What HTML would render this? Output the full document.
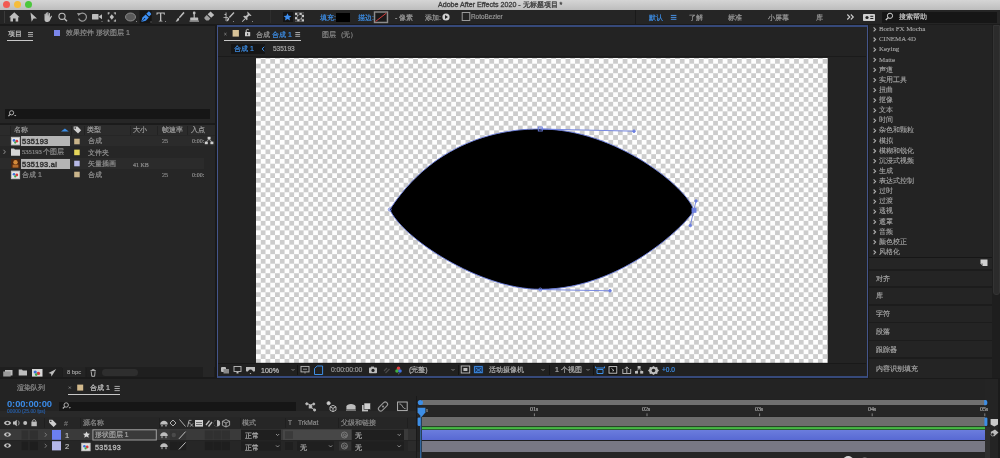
<!DOCTYPE html>
<html><head><meta charset="utf-8">
<style>
*{margin:0;padding:0;box-sizing:border-box}
html,body{width:1000px;height:458px;overflow:hidden;background:#1a1a1a;font-family:"Liberation Sans",sans-serif;color:#9a9a9a;font-size:8px}
.a{position:absolute}
.t{position:absolute;z-index:5;white-space:nowrap;line-height:1;will-change:transform;-webkit-text-stroke:0.2px currentColor}
svg{position:absolute;overflow:visible}
#title{left:0;top:0;width:1000px;height:9.5px;background:linear-gradient(#d5d5d5,#bdbdbd)}
#tool{left:0;top:9.5px;width:1000px;height:14.5px;background:#252525}
#proj{left:0;top:26px;width:214.5px;height:351px;background:#262626}
#comp{left:216.6px;top:25px;width:651.2px;height:353px;background:#232323;border:1.6px solid #44558a;border-top:2px solid #36497a;border-bottom:2px solid #36497a}
#right{left:869px;top:24px;width:131px;height:354px;background:#1c1c1c}
#tl{left:0;top:379px;width:1000px;height:79px;background:#232323}
.checker{background-color:#fff;background-image:linear-gradient(45deg,#cbcbcb 25%,transparent 25%,transparent 75%,#cbcbcb 75%),linear-gradient(45deg,#cbcbcb 25%,transparent 25%,transparent 75%,#cbcbcb 75%);background-size:9.4px 9.4px;background-position:0 0,4.7px 4.7px}
</style></head><body>
<!-- TITLE BAR -->
<div id="title" class="a"></div>
<div class="a" style="left:3.4px;top:1px;width:7px;height:7px;border-radius:50%;background:#f25a52"></div>
<div class="a" style="left:14.1px;top:1px;width:7px;height:7px;border-radius:50%;background:#f6bd3b"></div>
<div class="a" style="left:24.9px;top:1px;width:7px;height:7px;border-radius:50%;background:#4cc73d"></div>
<div class="t" style="left:437.5px;top:1.5px;font-size:7.1px;color:#3c3c3c;-webkit-text-stroke:0.3px #3c3c3c">Adobe After Effects 2020 - 无标题项目 *</div>
<!-- TOOLBAR -->
<div id="tool" class="a"></div>
<div class="a" style="left:3.5px;top:11px;width:1px;height:12px;background:#3a3a3a"></div>
<svg style="left:0;top:9px" width="270" height="15">
<g fill="#bdbdbd" stroke="none">
<!-- home -->
<path d="M14.3,3.3 L19.6,8.2 L18.2,8.2 L18.2,12.4 L15.6,12.4 L15.6,9.6 L13,9.6 L13,12.4 L10.4,12.4 L10.4,8.2 L9,8.2 Z"/>
<!-- arrow -->
<path d="M30.5,3.5 L37,9.5 L33.6,9.6 L31.6,12.8 Z"/>
<!-- hand -->
<path d="M44.5,8 L44.5,5.2 C44.5,4.5 45.6,4.5 45.6,5.2 L45.6,7.5 L45.8,4 C45.8,3.3 46.9,3.3 46.9,4 L47,7.3 L47.3,3.6 C47.3,2.9 48.4,2.9 48.4,3.6 L48.4,7.3 L48.9,4.4 C49,3.7 50,3.8 50,4.5 L49.8,8.5 L51,7 C51.5,6.4 52.3,6.9 51.9,7.6 L49.9,11.6 C49.3,12.6 48.6,13 47.6,13 L46.6,13 C45.3,13 44.5,12 44.5,10.8 Z"/>
</g>
<g fill="none" stroke="#bdbdbd">
<!-- zoom -->
<circle cx="62" cy="7.3" r="3.1" stroke-width="1.1"/><line x1="64.3" y1="9.6" x2="67" y2="12.3" stroke-width="1.4"/>
<!-- rotate -->
<path d="M79.3,5.6 A4,4 0 1 1 78.7,9.5" stroke-width="1.2" stroke="#9a9a9a"/>
</g>
<g fill="#bdbdbd">
<path d="M77,4 L80.6,4.2 L78.6,7 Z" fill="#9a9a9a"/>
<!-- camera -->
<rect x="92" y="5" width="6.5" height="5.5" rx="0.6"/><path d="M98.5,7.7 L102,5.3 L102,10.3 Z"/>
<rect x="101.5" y="12" width="1" height="1" fill="#888"/>
<!-- pan behind -->
<g fill="#bdbdbd"><rect x="107.8" y="3.5" width="2" height="1"/><rect x="113.8" y="3.5" width="2" height="1"/><rect x="107.8" y="11.5" width="2" height="1"/><rect x="113.8" y="11.5" width="2" height="1"/><rect x="107.8" y="3.5" width="1" height="2"/><rect x="114.8" y="3.5" width="1" height="2"/><rect x="107.8" y="10.5" width="1" height="2"/><rect x="114.8" y="10.5" width="1" height="2"/><path d="M111.8,5.2 L114,8 L111.8,10.8 L109.6,8 Z"/></g>
<!-- ellipse -->
<ellipse cx="130.5" cy="8" rx="5" ry="4" fill="#5a5a5a" stroke="#9a9a9a" stroke-width="0.8"/>
<rect x="136" y="12" width="1" height="1" fill="#888"/>
</g>
<rect x="139.6" y="1.5" width="12" height="13" fill="#151515"/>
<path d="M141.2,13 L142.4,8.4 L145.6,5.4 L148.8,8.6 L145.8,11.8 Z" fill="#3d8ef0"/><line x1="141.4" y1="12.8" x2="144.4" y2="9.8" stroke="#10203a" stroke-width="0.7"/><circle cx="144.6" cy="9.6" r="0.7" fill="#10203a"/>
<path d="M146.3,4.7 L148.3,2.7 C149,2 151.8,4.8 151.1,5.5 L149.1,7.5 Z" fill="#3d8ef0"/>
<rect x="150.5" y="12.5" width="1" height="1" fill="#888"/>
<g fill="#bdbdbd">
<!-- T -->
<path d="M156.5,3.5 L164.8,3.5 L164.8,5.8 L164,5.8 L163.5,4.6 L161.3,4.6 L161.3,11.6 L162.5,12 L162.5,12.6 L158.8,12.6 L158.8,12 L160,11.6 L160,4.6 L157.8,4.6 L157.3,5.8 L156.5,5.8 Z"/>
<rect x="165" y="12" width="1" height="1" fill="#888"/>
<!-- brush -->
<path d="M183.5,2.8 L184.6,3.9 L179.8,9.2 L178.8,8.2 Z"/><path d="M178.3,8.8 L179.3,9.8 C179,12 177.6,12.8 175.6,12.8 C176.8,11.8 176.6,9.8 178.3,8.8 Z"/>
<!-- stamp -->
<circle cx="194.2" cy="4" r="1.4"/><rect x="193.6" y="4" width="1.2" height="5"/><rect x="190.2" y="8.6" width="8" height="2.8" rx="0.5"/><rect x="189.5" y="11.6" width="9.5" height="1"/>
<!-- eraser -->
<path d="M207.6,5.2 L210.6,2.4 L214.2,6 L211.2,8.8 Z"/><path d="M206.8,6 L210.4,9.6 L208.6,11.4 L206.2,11.4 L204.8,10 C204.2,9.4 204.2,8.6 204.8,8 Z" fill="#9f9f9f"/>
<!-- roto brush -->
<path d="M224.5,5 L225.6,5 L225.6,3.5 L226.5,3.5 L226.5,12 L225.6,12 L225.6,6 L224.5,6 Z"/><path d="M223.5,8.2 L228,8.2 L228,9 L223.5,9 Z"/>
<path d="M233.5,3 L234.5,4 L229.8,9 L228.8,8 Z"/><path d="M228.3,8.5 L229.3,9.5 C229,11.6 227.9,12.5 226.3,12.6 C227.3,11.6 227,9.7 228.3,8.5 Z"/>
<rect x="233" y="12" width="1" height="1" fill="#888"/>
<!-- pin -->
<path d="M247.5,2.6 L251.6,6.7 L250.6,7.1 L249.2,6.6 L247.3,8.5 L247.6,10.4 L246.8,11.2 L243.2,7.6 L244,6.8 L245.9,7.1 L247.8,5.2 L247.3,3.8 Z"/><path d="M244.6,9.4 L245.4,10.2 L242.4,13 L241.8,12.4 Z"/>
<rect x="252" y="12" width="1" height="1" fill="#888"/>
</g>
</svg>
<div class="a" style="left:269.5px;top:10px;width:1px;height:13px;background:#2e2e2e"></div>
<div class="a" style="left:282.6px;top:12.3px;width:10.2px;height:9.6px;background:#141414"></div>
<svg style="left:0;top:9px" width="1000" height="15">
<path d="M287.5,4.2 L288.7,6.7 L291.4,7 L289.4,8.8 L290,11.5 L287.5,10.1 L285,11.5 L285.6,8.8 L283.6,7 L286.3,6.7 Z" fill="#3d8ef0"/>
<rect x="295" y="3.7" width="9" height="8.8" fill="#c8c8c8"/><rect x="295.00" y="5.90" width="2.25" height="2.2" fill="#3a3a3a"/><rect x="295.00" y="10.30" width="2.25" height="2.2" fill="#3a3a3a"/><rect x="297.25" y="3.70" width="2.25" height="2.2" fill="#3a3a3a"/><rect x="297.25" y="8.10" width="2.25" height="2.2" fill="#3a3a3a"/><rect x="299.50" y="5.90" width="2.25" height="2.2" fill="#3a3a3a"/><rect x="299.50" y="10.30" width="2.25" height="2.2" fill="#3a3a3a"/><rect x="301.75" y="3.70" width="2.25" height="2.2" fill="#3a3a3a"/><rect x="301.75" y="8.10" width="2.25" height="2.2" fill="#3a3a3a"/><circle cx="299.5" cy="8.1" r="2" fill="#2a2a2a"/>
<rect x="374.5" y="3" width="13" height="10.5" fill="none" stroke="#8c8c8c" stroke-width="1.4"/>
<rect x="376" y="4.5" width="10" height="7.5" fill="#1a1a1a"/>
<line x1="375.5" y1="12.5" x2="386.5" y2="4" stroke="#d43d3d" stroke-width="1"/>
<circle cx="446" cy="8" r="3.6" fill="#d0d0d0"/><path d="M445,6 L448,8 L445,10 Z" fill="#222"/>
<rect x="462.2" y="3.5" width="7.6" height="8" fill="none" stroke="#9a9a9a" stroke-width="1"/>
<rect x="670.8" y="5.9" width="5.6" height="1" fill="#4a8fe0"/><rect x="670.8" y="7.9" width="5.6" height="1" fill="#4a8fe0"/><rect x="670.8" y="9.8" width="5.6" height="1" fill="#4a8fe0"/>
<path d="M847.3,5.5 L849.8,8 L847.3,10.5 M850.8,5.5 L853.3,8 L850.8,10.5" stroke="#cfcfcf" stroke-width="1.1" fill="none"/>
<rect x="863" y="5" width="12" height="7" rx="0.8" fill="#cfcfcf"/>
<circle cx="867" cy="8.5" r="1.6" fill="#222"/><rect x="870.3" y="6.8" width="3" height="1" fill="#222"/><rect x="870.3" y="9" width="3" height="1" fill="#222"/>
</svg>
<div class="a" style="left:336.2px;top:12.8px;width:13.4px;height:9px;background:#000"></div>
<div class="t" style="left:319.5px;top:13.6px;font-size:7px;color:#3d8ee6">填充:</div>
<div class="t" style="left:357.5px;top:13.6px;font-size:7px;color:#3d8ee6">描边:</div>
<div class="t" style="left:395px;top:13.6px;font-size:7px;color:#9a9a9a">- 像素</div>
<div class="t" style="left:425px;top:13.6px;font-size:7px;color:#9a9a9a">添加:</div>
<div class="t" style="left:471.4px;top:13.8px;font-size:6.4px;color:#9a9a9a">RotoBezier</div>
<div class="a" style="left:635px;top:10px;width:1px;height:14px;background:#1a1a1a"></div>
<div class="t" style="left:648.8px;top:13.6px;font-size:7px;color:#3d8ee6">默认</div>
<div class="t" style="left:689px;top:13.6px;font-size:7px;color:#9a9a9a">了解</div>
<div class="t" style="left:728px;top:13.6px;font-size:7px;color:#9a9a9a">标准</div>
<div class="t" style="left:768.4px;top:13.6px;font-size:7px;color:#9a9a9a">小屏幕</div>
<div class="t" style="left:816px;top:13.6px;font-size:7px;color:#9a9a9a">库</div>
<div class="a" style="left:882px;top:12px;width:115px;height:10.6px;background:#161616"></div>
<svg style="left:0;top:0" width="1000" height="30">
<circle cx="890" cy="15.8" r="2.6" fill="none" stroke="#cfcfcf" stroke-width="1"/><line x1="888.2" y1="17.6" x2="885.8" y2="20" stroke="#cfcfcf" stroke-width="1.3"/>
</svg>
<div class="t" style="left:899px;top:13.4px;font-size:7px;color:#c8c8c8">搜索帮助</div>

<!-- PANELS -->
<div id="proj" class="a"></div>
<div class="t" style="left:7.5px;top:30px;font-size:7.2px;color:#c4c4c4">项目</div>
<svg style="left:0;top:0" width="40" height="42"><g fill="#a8a8a8"><rect x="28" y="32" width="5" height="1"/><rect x="28" y="33.9" width="5" height="1"/><rect x="28" y="35.8" width="5" height="1"/></g></svg>
<div class="a" style="left:7px;top:39.6px;width:26px;height:1.2px;background:#c8c8c8"></div>
<div class="a" style="left:54px;top:30.4px;width:6.2px;height:6px;background:#7a86ea"></div>
<div class="t" style="left:65.8px;top:30.2px;font-size:7.1px;color:#8c8c8c">效果控件 形状图层 1</div>
<div class="a" style="left:5px;top:108.8px;width:205px;height:10.4px;background:#161616"></div>
<svg style="left:0;top:0" width="215" height="380">
<circle cx="11.6" cy="112.8" r="2.1" fill="none" stroke="#bdbdbd" stroke-width="0.9"/><line x1="10.2" y1="114.3" x2="8.4" y2="116.2" stroke="#bdbdbd" stroke-width="1.1"/><path d="M14,115 L16.4,115 L15.2,116.3Z" fill="#bdbdbd"/>
</svg>
<div class="a" style="left:0;top:123.4px;width:215px;height:1.2px;background:#1b1b1b"></div>
<div class="a" style="left:0;top:124.6px;width:214.5px;height:10.6px;background:#2b2b2b"></div><div class="a" style="left:10.3px;top:125.5px;width:0.8px;height:9px;background:#222"></div><div class="a" style="left:71.4px;top:125.5px;width:0.8px;height:9px;background:#222"></div>
<div class="a" style="left:129.6px;top:125.5px;width:0.8px;height:9px;background:#222"></div>
<div class="a" style="left:157.2px;top:125.5px;width:0.8px;height:9px;background:#222"></div>
<div class="a" style="left:187px;top:125.5px;width:0.8px;height:9px;background:#222"></div>
<div class="a" style="left:84px;top:125.5px;width:0.8px;height:9px;background:#222"></div>
<div class="t" style="left:13.6px;top:126.4px;font-size:7px;color:#9c9c9c">名称</div>
<svg style="left:0;top:0" width="215" height="380">
<path d="M61,131.6 L64.9,128.6 L68.8,131.6 Z" fill="#3d8ee6"/>
<path d="M73.6,126.6 L77.5,126.6 L81.2,130.3 L78,133.5 L73.6,129.3 Z" fill="#cfcfcf"/><circle cx="75.2" cy="128.1" r="0.8" fill="#2b2b2b"/>
</svg>
<div class="t" style="left:86.8px;top:126.4px;font-size:7px;color:#9c9c9c">类型</div>
<div class="t" style="left:132.6px;top:126.4px;font-size:7px;color:#9c9c9c">大小</div>
<div class="t" style="left:161.5px;top:126.4px;font-size:7px;color:#9c9c9c">帧速率</div>
<div class="t" style="left:190.8px;top:126.4px;font-size:7px;color:#9c9c9c">入点</div>
<!-- rows -->
<div class="a" style="left:0;top:135.6px;width:214.5px;height:10.6px;background:#2b2b2b"></div>
<div class="a" style="left:0;top:158.3px;width:204px;height:10.6px;background:#2b2b2b"></div>
<div class="a" style="left:20.8px;top:136.1px;width:49.1px;height:9.8px;background:#b5b5b5"></div>
<div class="a" style="left:20.8px;top:158.5px;width:49.1px;height:10.3px;background:#b5b5b5"></div>
<svg style="left:0;top:0" width="215" height="380">
<g><rect x="10.9" y="136.8" width="9.2" height="8.6" fill="#bdbdbd"/><rect x="12" y="137.9" width="7" height="6.4" fill="#e6e6e6"/><circle cx="14" cy="140.4" r="1.3" fill="#3a6fd8"/><circle cx="16.8" cy="141.20000000000002" r="1.4" fill="#d83a3a"/><circle cx="15.2" cy="142.60000000000002" r="1.1" fill="#3aa84a"/></g>
<path d="M3.5,149.8 L5.4,151.9 L3.5,154" fill="none" stroke="#9a9a9a" stroke-width="0.9"/>
<path d="M11,148.5 L14,148.5 L15,149.5 L20,149.5 L20,155.8 L11,155.8 Z" fill="#d6d6d6"/>
<g><rect x="11" y="159" width="9" height="9.2" fill="#4a2410"/><circle cx="15.5" cy="162.2" r="2.2" fill="#d58a3a"/><rect x="12.6" y="164.6" width="5.8" height="3" fill="#b56a2a"/></g>
<g><rect x="10.9" y="170.6" width="9.2" height="8.6" fill="#bdbdbd"/><rect x="12" y="171.7" width="7" height="6.4" fill="#e6e6e6"/><circle cx="14" cy="174.2" r="1.3" fill="#3a6fd8"/><circle cx="16.8" cy="175.0" r="1.4" fill="#d83a3a"/><circle cx="15.2" cy="176.4" r="1.1" fill="#3aa84a"/></g>
<rect x="74.2" y="138.7" width="5.5" height="5.6" fill="#c9b48a"/>
<rect x="74.2" y="149.6" width="5.5" height="5.6" fill="#e6d65a"/>
<rect x="74.2" y="160.7" width="5.5" height="5.6" fill="#b6b8e6"/>
<rect x="74.2" y="171.7" width="5.5" height="5.6" fill="#c9b48a"/>
<g fill="#d0d0d0"><rect x="207.6" y="136.8" width="3" height="2.6"/><rect x="204.8" y="141.6" width="3" height="2.6"/><rect x="210.4" y="141.6" width="3" height="2.6"/><path d="M209,139.4 L206.3,141.6 M209,139.4 L211.9,141.6" stroke="#d0d0d0" stroke-width="0.6"/></g>
</svg>
<div class="t" style="left:22px;top:138px;font-size:7.4px;color:#333;letter-spacing:0.3px;-webkit-text-stroke:0.45px #333">535193</div>
<div class="t" style="left:22px;top:160.8px;font-size:7.4px;color:#333;letter-spacing:0.3px;-webkit-text-stroke:0.45px #333">535193.ai</div>
<div class="t" style="left:22px;top:148.6px;font-size:6.6px;color:#8c8c8c;font-family:'Liberation Serif',serif">535193 个图层</div>
<div class="t" style="left:22px;top:171.3px;font-size:7px;color:#8c8c8c">合成 1</div>
<div class="t" style="left:88px;top:137.9px;font-size:6.6px;color:#909090">合成</div>
<div class="t" style="left:88px;top:149.6px;font-size:6.6px;color:#909090">文件夹</div>
<div class="t" style="left:88px;top:160.8px;font-size:6.6px;color:#909090">矢量插画</div>
<div class="t" style="left:88px;top:172.1px;font-size:6.6px;color:#909090">合成</div>
<div class="t" style="left:133.4px;top:161.8px;font-size:6px;color:#8c8c8c;font-family:'Liberation Serif',serif">41 KB</div>
<div class="t" style="left:162.4px;top:138px;font-size:6px;color:#8c8c8c;font-family:'Liberation Serif',serif">25</div>
<div class="t" style="left:162.4px;top:172px;font-size:6px;color:#8c8c8c;font-family:'Liberation Serif',serif">25</div>
<div class="t" style="left:191.5px;top:138px;font-size:6px;color:#8c8c8c;font-family:'Liberation Serif',serif">0:00:</div>
<div class="t" style="left:191.5px;top:172px;font-size:6px;color:#8c8c8c;font-family:'Liberation Serif',serif">0:00:</div>
<!-- project bottom toolbar -->
<div class="a" style="left:0;top:366.5px;width:215px;height:0.8px;background:#1a1a1a"></div>
<div class="a" style="left:0;top:366.6px;width:214.5px;height:10.6px;background:#1f1f1f"></div><div class="a" style="left:62.3px;top:367.4px;width:23px;height:9.2px;background:#242424"></div><div class="a" style="left:203px;top:367.4px;width:11px;height:9.2px;background:#262626"></div>
<svg style="left:0;top:0" width="215" height="380">
<g fill="#bdbdbd">
<rect x="5" y="370" width="7.5" height="5.5"/><rect x="3.2" y="371.5" width="7.5" height="5" fill="#9a9a9a"/>
<path d="M18.7,369.5 L22,369.5 L22.8,370.5 L27,370.5 L27,375.5 L18.7,375.5 Z"/>
<rect x="32" y="369" width="10.5" height="7.6" fill="#d8d8d8"/><circle cx="35.2" cy="372" r="1.6" fill="#3a6fd8"/><circle cx="38.4" cy="373.4" r="1.7" fill="#d83a3a"/><circle cx="36.2" cy="374.6" r="1.3" fill="#3aa84a"/>
<path d="M56.2,369 L48.5,373 L51,373.8 L51.5,376.4 Z"/>
<path d="M90.5,370.6 L95.8,370.6 M91.2,371.4 L91.8,376.3 L94.6,376.3 L95.1,371.4 M92.2,370.6 L92.2,369.6 L94.2,369.6 L94.2,370.6" stroke="#bdbdbd" stroke-width="0.9" fill="none"/>
</g>
</svg>
<div class="a" style="left:61.5px;top:368px;width:0.8px;height:9px;background:#1d1d1d"></div>
<div class="a" style="left:85.5px;top:368px;width:0.8px;height:9px;background:#1d1d1d"></div>
<div class="t" style="left:66.7px;top:369.6px;font-size:5.8px;color:#9a9a9a">8 bpc</div>
<div class="a" style="left:102px;top:368.6px;width:36px;height:7.6px;border-radius:4px;background:#2e2e2e"></div>

<div id="comp" class="a"></div>
<svg style="left:0;top:0" width="870" height="60">
<path d="M224.3,33 L226.5,35.2 M226.5,33 L224.3,35.2" stroke="#8a8a8a" stroke-width="0.8"/>
<rect x="232.6" y="30" width="6.3" height="6.6" fill="#d8c298"/>
<path d="M246.2,32 L246.2,30.6 C246.2,29.2 248.4,29 248.8,30" fill="none" stroke="#cfcfcf" stroke-width="1"/>
<rect x="245" y="32" width="5.2" height="4.2" rx="0.5" fill="#cfcfcf"/><rect x="247.2" y="33.2" width="0.9" height="2" fill="#232323"/>
<rect x="295.3" y="32" width="4.8" height="1" fill="#a8a8a8"/><rect x="295.3" y="33.9" width="4.8" height="1" fill="#a8a8a8"/><rect x="295.3" y="35.8" width="4.8" height="1" fill="#a8a8a8"/>
</svg>
<div class="t" style="left:255.8px;top:30.6px;font-size:7px;color:#9a9a9a">合成</div>
<div class="t" style="left:271.8px;top:30.6px;font-size:7px;color:#3d8ee6">合成 1</div>
<div class="a" style="left:224px;top:39.6px;width:77px;height:1.2px;background:#c8c8c8"></div>
<div class="t" style="left:322px;top:30.6px;font-size:7px;color:#8a8a8a;letter-spacing:-0.45px">图层 （无）</div>
<div class="a" style="left:230.7px;top:44px;width:34.2px;height:9.8px;background:#161616"></div>
<div class="t" style="left:234px;top:45.4px;font-size:7px;color:#3d8ee6">合成 1</div>
<svg style="left:0;top:0" width="870" height="60"><path d="M264.3,46.8 L262,48.9 L264.3,51" fill="none" stroke="#3d8ee6" stroke-width="1"/></svg>
<div class="t" style="left:272.6px;top:46.2px;font-size:6.5px;color:#a8a8a8">535193</div>
<div class="a" style="left:218px;top:55.8px;width:648px;height:1px;background:#1a1a1a"></div>
<!-- comp bottom toolbar -->
<div class="a" style="left:218.2px;top:362.8px;width:648px;height:13.2px;background:#212121;border-top:1px solid #191919"></div>
<svg style="left:0;top:0" width="870" height="380">
<g fill="#bdbdbd">
<rect x="221" y="367" width="5" height="5" rx="1"/><rect x="223.5" y="369" width="5.5" height="4.5" fill="#8a8a8a"/>
<rect x="234" y="366.5" width="7" height="5" fill="none" stroke="#bdbdbd" stroke-width="0.9"/><rect x="236.5" y="372" width="2" height="1.5"/>
<path d="M246,367 L255,367 L255,370.5 C255,372 253,372 252.4,370.6 L251.2,369.5 L249.8,369.5 L248.6,370.6 C248,372 246,372 246,370.5 Z"/><path d="M249.6,373 L251.4,373 L250.5,374.2Z"/>
<path d="M291.5,369 L293,370.5 L294.5,369" fill="none" stroke="#9a9a9a" stroke-width="0.8"/>
<rect x="301" y="366.4" width="8" height="5.5" fill="none" stroke="#bdbdbd" stroke-width="0.9"/><path d="M304.2,372.6 L305.8,372.6 L305,373.8Z"/><line x1="303" y1="369.2" x2="307" y2="369.2" stroke="#bdbdbd" stroke-width="0.7"/>
<path d="M314.5,374.5 L314.5,368.5 L317.2,366 L322.6,366 L322.6,374.5 Z" fill="none" stroke="#3d8ee6" stroke-width="1"/>
<rect x="369" y="367.6" width="8" height="5.6" rx="0.8"/><rect x="371" y="366.6" width="3" height="1.3"/><circle cx="373" cy="370.4" r="1.6" fill="#1f1f1f"/>
<path d="M384,371 L387,368 M385.5,373 L389.5,369" stroke="#4a4a4a" stroke-width="1.2"/>
<circle cx="398.5" cy="368.4" r="1.8" fill="#e04040"/><circle cx="397" cy="371" r="1.8" fill="#40b040"/><circle cx="400" cy="371" r="1.8" fill="#4070e0"/><path d="M398,373.6 L399.6,373.6 L398.8,374.6Z" fill="#9a9a9a"/>
<path d="M451.5,369 L453,370.5 L454.5,369" fill="none" stroke="#9a9a9a" stroke-width="0.8"/>
<rect x="461.2" y="366" width="8.5" height="7" fill="none" stroke="#bdbdbd" stroke-width="0.9"/><rect x="463.4" y="368" width="4" height="3"/>
<rect x="473.6" y="365.6" width="9.6" height="8" fill="#1b3a66"/><rect x="474.6" y="366.6" width="7.6" height="6" fill="none" stroke="#3d8ee6" stroke-width="0.9"/><path d="M476,368 L481,372 M481,368 L476,372" stroke="#3d8ee6" stroke-width="0.8"/>
<path d="M541.5,369 L543,370.5 L544.5,369" fill="none" stroke="#9a9a9a" stroke-width="0.8"/>
<path d="M586.5,369 L588,370.5 L589.5,369" fill="none" stroke="#9a9a9a" stroke-width="0.8"/>
<path d="M595.5,366.5 L595.5,368 L604.5,368 L604.5,366.5 M597,369.5 L603,369.5 L603,373.5 L597,373.5 Z" fill="none" stroke="#3d8ee6" stroke-width="1"/>
<rect x="607.6" y="365.2" width="10.6" height="9.6" fill="#111"/><rect x="609" y="366.6" width="7.8" height="6.6" fill="none" stroke="#cfcfcf" stroke-width="0.9"/><path d="M611.5,368.5 L614,370.5 L612.4,371" fill="none" stroke="#cfcfcf" stroke-width="0.8"/>
<path d="M622.5,373.5 L631,373.5 M622.8,373.5 L622.8,369 M630.7,373.5 L630.7,369 M626.8,373 L626.8,367 M624.8,369 L626.8,366.8 L628.8,369" fill="none" stroke="#bdbdbd" stroke-width="0.9"/>
<rect x="637.6" y="366" width="3" height="2.6"/><rect x="635" y="371" width="3" height="2.6"/><rect x="640.2" y="371" width="3" height="2.6"/><path d="M639.1,368.6 L636.5,371 M639.1,368.6 L641.7,371" stroke="#bdbdbd" stroke-width="0.7"/>
<path d="M653.5,366 L655.2,367.2 L657.2,367 L657.6,369 L659,370.5 L657.6,372 L657.2,374 L655.2,373.8 L653.5,375 L651.8,373.8 L649.8,374 L649.4,372 L648,370.5 L649.4,369 L649.8,367 L651.8,367.2 Z"/><circle cx="653.5" cy="370.5" r="1.8" fill="#1f1f1f"/>
</g>
</svg>
<div class="a" style="left:297px;top:364.5px;width:0.8px;height:10px;background:#141414"></div>
<div class="a" style="left:458px;top:364.5px;width:0.8px;height:10px;background:#141414"></div>
<div class="a" style="left:549px;top:364.5px;width:0.8px;height:10px;background:#141414"></div>
<div class="a" style="left:592.5px;top:364.5px;width:0.8px;height:10px;background:#141414"></div>
<div class="t" style="left:261px;top:367px;font-size:7px;color:#c0c0c0">100%</div>
<div class="t" style="left:330.6px;top:367.2px;font-size:6.8px;color:#9a9a9a;letter-spacing:-0.1px">0:00:00:00</div>
<div class="t" style="left:408.5px;top:366.4px;font-size:7px;color:#b0b0b0">(完整)</div>
<div class="t" style="left:489px;top:366.4px;font-size:7px;color:#b0b0b0">活动摄像机</div>
<div class="t" style="left:555px;top:366.4px;font-size:7px;color:#b0b0b0">1 个视图</div>
<div class="t" style="left:661.8px;top:367.4px;font-size:6.6px;color:#3d8ee6">+0.0</div>

<div id="right" class="a"></div>
<div class="a" style="left:869px;top:25px;width:123px;height:232px;background:#232323"></div>
<div class="a" style="left:992px;top:25px;width:8px;height:353px;background:#1e1e1e"></div><div class="a" style="left:993px;top:25px;width:6.5px;height:270px;background:#2b2b2b;border-radius:0 0 3px 3px;border:0.6px solid #333"></div>
<svg style="left:0;top:0" width="1000" height="458"><g fill="none" stroke="#b0b0b0" stroke-width="1.1"><path d="M873.6,27.4 L875.6,29.4 L873.6,31.4"/><path d="M873.6,37.5 L875.6,39.5 L873.6,41.5"/><path d="M873.6,47.7 L875.6,49.7 L873.6,51.7"/><path d="M873.6,57.8 L875.6,59.8 L873.6,61.8"/><path d="M873.6,67.9 L875.6,69.9 L873.6,71.9"/><path d="M873.6,78.1 L875.6,80.1 L873.6,82.1"/><path d="M873.6,88.2 L875.6,90.2 L873.6,92.2"/><path d="M873.6,98.3 L875.6,100.3 L873.6,102.3"/><path d="M873.6,108.4 L875.6,110.4 L873.6,112.4"/><path d="M873.6,118.6 L875.6,120.6 L873.6,122.6"/><path d="M873.6,128.7 L875.6,130.7 L873.6,132.7"/><path d="M873.6,138.8 L875.6,140.8 L873.6,142.8"/><path d="M873.6,149.0 L875.6,151.0 L873.6,153.0"/><path d="M873.6,159.1 L875.6,161.1 L873.6,163.1"/><path d="M873.6,169.2 L875.6,171.2 L873.6,173.2"/><path d="M873.6,179.4 L875.6,181.4 L873.6,183.4"/><path d="M873.6,189.5 L875.6,191.5 L873.6,193.5"/><path d="M873.6,199.6 L875.6,201.6 L873.6,203.6"/><path d="M873.6,209.7 L875.6,211.7 L873.6,213.7"/><path d="M873.6,219.9 L875.6,221.9 L873.6,223.9"/><path d="M873.6,230.0 L875.6,232.0 L873.6,234.0"/><path d="M873.6,240.1 L875.6,242.1 L873.6,244.1"/><path d="M873.6,250.3 L875.6,252.3 L873.6,254.3"/></g></svg>
<div class="t" style="left:879px;top:26.1px;font-size:6.9px;color:#a8a8a8;font-family:'Liberation Serif',serif;-webkit-text-stroke:0.1px currentColor">Boris FX Mocha</div>
<div class="t" style="left:879px;top:36.2px;font-size:6.9px;color:#a8a8a8;font-family:'Liberation Serif',serif;-webkit-text-stroke:0.1px currentColor">CINEMA 4D</div>
<div class="t" style="left:879px;top:46.4px;font-size:6.9px;color:#a8a8a8;font-family:'Liberation Serif',serif;-webkit-text-stroke:0.1px currentColor">Keying</div>
<div class="t" style="left:879px;top:56.5px;font-size:6.9px;color:#a8a8a8;font-family:'Liberation Serif',serif;-webkit-text-stroke:0.1px currentColor">Matte</div>
<div class="t" style="left:879px;top:66.6px;font-size:6.9px;color:#a8a8a8;font-family:'Liberation Serif',serif;-webkit-text-stroke:0.1px currentColor">声道</div>
<div class="t" style="left:879px;top:76.8px;font-size:6.9px;color:#a8a8a8;font-family:'Liberation Serif',serif;-webkit-text-stroke:0.1px currentColor">实用工具</div>
<div class="t" style="left:879px;top:86.9px;font-size:6.9px;color:#a8a8a8;font-family:'Liberation Serif',serif;-webkit-text-stroke:0.1px currentColor">扭曲</div>
<div class="t" style="left:879px;top:97.0px;font-size:6.9px;color:#a8a8a8;font-family:'Liberation Serif',serif;-webkit-text-stroke:0.1px currentColor">抠像</div>
<div class="t" style="left:879px;top:107.1px;font-size:6.9px;color:#a8a8a8;font-family:'Liberation Serif',serif;-webkit-text-stroke:0.1px currentColor">文本</div>
<div class="t" style="left:879px;top:117.3px;font-size:6.9px;color:#a8a8a8;font-family:'Liberation Serif',serif;-webkit-text-stroke:0.1px currentColor">时间</div>
<div class="t" style="left:879px;top:127.4px;font-size:6.9px;color:#a8a8a8;font-family:'Liberation Serif',serif;-webkit-text-stroke:0.1px currentColor">杂色和颗粒</div>
<div class="t" style="left:879px;top:137.5px;font-size:6.9px;color:#a8a8a8;font-family:'Liberation Serif',serif;-webkit-text-stroke:0.1px currentColor">模拟</div>
<div class="t" style="left:879px;top:147.7px;font-size:6.9px;color:#a8a8a8;font-family:'Liberation Serif',serif;-webkit-text-stroke:0.1px currentColor">模糊和锐化</div>
<div class="t" style="left:879px;top:157.8px;font-size:6.9px;color:#a8a8a8;font-family:'Liberation Serif',serif;-webkit-text-stroke:0.1px currentColor">沉浸式视频</div>
<div class="t" style="left:879px;top:167.9px;font-size:6.9px;color:#a8a8a8;font-family:'Liberation Serif',serif;-webkit-text-stroke:0.1px currentColor">生成</div>
<div class="t" style="left:879px;top:178.1px;font-size:6.9px;color:#a8a8a8;font-family:'Liberation Serif',serif;-webkit-text-stroke:0.1px currentColor">表达式控制</div>
<div class="t" style="left:879px;top:188.2px;font-size:6.9px;color:#a8a8a8;font-family:'Liberation Serif',serif;-webkit-text-stroke:0.1px currentColor">过时</div>
<div class="t" style="left:879px;top:198.3px;font-size:6.9px;color:#a8a8a8;font-family:'Liberation Serif',serif;-webkit-text-stroke:0.1px currentColor">过渡</div>
<div class="t" style="left:879px;top:208.4px;font-size:6.9px;color:#a8a8a8;font-family:'Liberation Serif',serif;-webkit-text-stroke:0.1px currentColor">透视</div>
<div class="t" style="left:879px;top:218.6px;font-size:6.9px;color:#a8a8a8;font-family:'Liberation Serif',serif;-webkit-text-stroke:0.1px currentColor">遮罩</div>
<div class="t" style="left:879px;top:228.7px;font-size:6.9px;color:#a8a8a8;font-family:'Liberation Serif',serif;-webkit-text-stroke:0.1px currentColor">音频</div>
<div class="t" style="left:879px;top:238.8px;font-size:6.9px;color:#a8a8a8;font-family:'Liberation Serif',serif;-webkit-text-stroke:0.1px currentColor">颜色校正</div>
<div class="t" style="left:879px;top:249.0px;font-size:6.9px;color:#a8a8a8;font-family:'Liberation Serif',serif;-webkit-text-stroke:0.1px currentColor">风格化</div>
<div class="a" style="left:869px;top:256.6px;width:123px;height:1px;background:#161616"></div>
<div class="a" style="left:869px;top:257.6px;width:123px;height:11.4px;background:#252525"></div>
<svg style="left:0;top:0" width="1000" height="458"><path d="M980.5,259.5 L987.5,259.5 L987.5,266 L983,266 L980.5,263.5 Z" fill="#d0d0d0"/><path d="M980.5,263.5 L983,263.5 L983,266" fill="#8a8a8a"/></svg>
<div class="a" style="left:869px;top:271px;width:122.5px;height:15px;background:#242424"></div>
<div class="t" style="left:876.3px;top:274.9px;font-size:7px;color:#a0a0a0">对齐</div>
<div class="a" style="left:869px;top:288px;width:122.5px;height:16px;background:#242424"></div>
<div class="t" style="left:876.3px;top:292.4px;font-size:7px;color:#a0a0a0">库</div>
<div class="a" style="left:869px;top:305.5px;width:122.5px;height:16.5px;background:#242424"></div>
<div class="t" style="left:876.3px;top:310.1px;font-size:7px;color:#a0a0a0">字符</div>
<div class="a" style="left:869px;top:323.4px;width:122.5px;height:16.600000000000023px;background:#242424"></div>
<div class="t" style="left:876.3px;top:328.1px;font-size:7px;color:#a0a0a0">段落</div>
<div class="a" style="left:869px;top:341.3px;width:122.5px;height:16.19999999999999px;background:#242424"></div>
<div class="t" style="left:876.3px;top:345.8px;font-size:7px;color:#a0a0a0">跟踪器</div>
<div class="a" style="left:869px;top:359px;width:122.5px;height:18.5px;background:#242424"></div>
<div class="t" style="left:876.3px;top:364.6px;font-size:7px;color:#a0a0a0">内容识别填充</div>


<div id="tl" class="a"></div>
<div class="t" style="left:16.5px;top:383.8px;font-size:7px;color:#8c8c8c">渲染队列</div>
<svg style="left:0;top:0" width="1000" height="458">
<path d="M68.8,386.6 L70.8,388.6 M70.8,386.6 L68.8,388.6" stroke="#8a8a8a" stroke-width="0.8"/>
<rect x="77.2" y="384.6" width="6" height="6" fill="#d2b98c"/>
<rect x="114.5" y="385.9" width="5.3" height="1" fill="#a8a8a8"/><rect x="114.5" y="388" width="5.3" height="1" fill="#a8a8a8"/><rect x="114.5" y="390.1" width="5.3" height="1" fill="#a8a8a8"/>
</svg>
<div class="t" style="left:90px;top:384px;font-size:7px;color:#c4c4c4">合成 1</div>
<div class="a" style="left:68.2px;top:394.2px;width:52px;height:1.2px;background:#c8c8c8"></div>
<div class="t" style="left:7.2px;top:399px;font-size:9.4px;font-weight:bold;color:#3a8ae6;letter-spacing:-0.1px;-webkit-text-stroke:0">0:00:00:00</div>
<div class="t" style="left:7px;top:410.4px;font-size:4.9px;color:#285a9c">00000 (25.00 fps)</div>
<div class="a" style="left:58.7px;top:401.6px;width:237.3px;height:9.4px;background:#161616"></div>
<svg style="left:0;top:0" width="1000" height="458">
<circle cx="66.2" cy="405" r="2.2" fill="none" stroke="#bdbdbd" stroke-width="0.9"/><line x1="64.7" y1="406.6" x2="62.8" y2="408.5" stroke="#bdbdbd" stroke-width="1.1"/><path d="M68.6,407.2 L71,407.2 L69.8,408.5Z" fill="#bdbdbd"/>
</svg>
<!-- header row -->
<div class="a" style="left:0;top:411.4px;width:416px;height:5.4px;background:#292929"></div>
<div class="a" style="left:0;top:416.8px;width:418px;height:1.2px;background:#1b1b1b"></div>
<div class="a" style="left:0;top:417.4px;width:416px;height:11.2px;background:#262626"></div>
<div class="a" style="left:0;top:428.6px;width:416px;height:0.6px;background:#1d1d1d"></div>
<svg style="left:0;top:0" width="1000" height="458">
<g fill="#bdbdbd">
<path d="M3.8,423 C5.5,420 9.5,420 11.2,423 C9.5,426 5.5,426 3.8,423 Z"/><circle cx="7.5" cy="423" r="1.3" fill="#262626"/>
<path d="M13,421.5 L14.6,421.5 L16.8,419.8 L16.8,426.2 L14.6,424.5 L13,424.5 Z"/><path d="M18,420.6 C19.5,422 19.5,424 18,425.4" fill="none" stroke="#bdbdbd" stroke-width="0.8"/>
<circle cx="25.2" cy="423" r="2" />
<path d="M32.4,421.6 C32.4,419 35.8,419 35.8,421.6" fill="none" stroke="#bdbdbd" stroke-width="0.9"/><rect x="31.4" y="421.6" width="5.4" height="4.6"/>
<path d="M49.2,419.8 L52.4,419.8 L56.6,424 L53.6,427 L49.2,422.8 Z" fill="#cfcfcf"/><circle cx="50.8" cy="421.3" r="0.8" fill="#262626"/>
</g>
</svg>
<div class="a" style="left:43.5px;top:418px;width:0.8px;height:10px;background:#1f1f1f"></div>
<div class="a" style="left:79.5px;top:418px;width:0.8px;height:10px;background:#1f1f1f"></div>
<div class="a" style="left:158.5px;top:418px;width:0.8px;height:10px;background:#1f1f1f"></div>
<div class="a" style="left:240px;top:418px;width:0.8px;height:10px;background:#1f1f1f"></div>
<div class="a" style="left:285px;top:418px;width:0.8px;height:10px;background:#1f1f1f"></div>
<div class="a" style="left:338px;top:418px;width:0.8px;height:10px;background:#1f1f1f"></div>
<div class="a" style="left:407px;top:418px;width:0.8px;height:10px;background:#1f1f1f"></div>
<div class="t" style="left:63.5px;top:419.6px;font-size:7px;color:#6a6a6a">#</div>
<div class="t" style="left:83.2px;top:419.3px;font-size:7px;color:#8a8a8a">源名称</div>
<div class="t" style="left:242px;top:419.3px;font-size:7px;color:#8a8a8a">模式</div>
<div class="t" style="left:287.5px;top:419.6px;font-size:6.6px;color:#8a8a8a">T</div>
<div class="t" style="left:298px;top:419.6px;font-size:6.6px;color:#8a8a8a">TrkMat</div>
<div class="t" style="left:341px;top:419.3px;font-size:7px;color:#8a8a8a">父级和链接</div>
<!-- layer rows -->
<div class="a" style="left:0;top:429.2px;width:416px;height:11.2px;background:#3a3a3a"></div>
<div class="a" style="left:0;top:440.6px;width:416px;height:10.4px;background:#262626"></div>
<div class="a" style="left:0;top:451px;width:1000px;height:7px;background:#262626"></div>
<svg style="left:0;top:0" width="1000" height="458">
<g fill="#bdbdbd">
<path d="M3.8,434.6 C5.5,431.6 9.5,431.6 11.2,434.6 C9.5,437.6 5.5,437.6 3.8,434.6 Z"/><circle cx="7.5" cy="434.6" r="1.3" fill="#3a3a3a"/>
<path d="M3.8,445.6 C5.5,442.6 9.5,442.6 11.2,445.6 C9.5,448.6 5.5,448.6 3.8,445.6 Z"/><circle cx="7.5" cy="445.6" r="1.3" fill="#262626"/>
</g>
<rect x="21.5" y="430.4" width="6.7" height="9.2" fill="#303030"/><rect x="29.7" y="430.4" width="8.2" height="9.2" fill="#303030"/>
<rect x="21.5" y="441.6" width="6.7" height="8.6" fill="#1e1e1e"/><rect x="29.7" y="441.6" width="8.2" height="8.6" fill="#1e1e1e"/>
<path d="M44.8,432.8 L46.6,434.8 L44.8,436.8" fill="none" stroke="#8a8a8a" stroke-width="0.8"/>
<path d="M44.8,443.8 L46.6,445.8 L44.8,447.8" fill="none" stroke="#8a8a8a" stroke-width="0.8"/>
<rect x="52" y="430" width="9" height="9.8" fill="#6b7ff0"/>
<rect x="52" y="441.2" width="9" height="9.2" fill="#b4b6e8"/>
<path d="M86.5,431.4 L87.6,433.6 L90,433.8 L88.2,435.4 L88.8,437.8 L86.5,436.5 L84.2,437.8 L84.8,435.4 L83,433.8 L85.4,433.6 Z" fill="#d8d8d8"/>
<rect x="81.2" y="442.8" width="9.4" height="8.4" fill="#c8c8c8"/><rect x="82.4" y="444" width="7" height="6" fill="#e0e0e0"/><circle cx="84.4" cy="446.2" r="1.3" fill="#3a6fd8"/><circle cx="87.2" cy="447" r="1.4" fill="#d83a3a"/><circle cx="85.6" cy="448.4" r="1.1" fill="#3aa84a"/>
<rect x="92.9" y="429.8" width="63.4" height="10.2" fill="#3a3a3a" stroke="#a0a0a0" stroke-width="1"/>
</svg>
<div class="t" style="left:64.6px;top:431.6px;font-size:7.5px;color:#bdbdbd">1</div>
<div class="t" style="left:64.6px;top:443.4px;font-size:7.5px;color:#bdbdbd">2</div>
<div class="t" style="left:94.8px;top:431.6px;font-size:6.7px;color:#a8a8a8">形状图层 1</div>
<div class="t" style="left:94.6px;top:443.8px;font-size:7.2px;color:#b0b0b0;letter-spacing:0.35px;-webkit-text-stroke:0.4px #b0b0b0">535193</div>
<svg style="left:0;top:0" width="1000" height="458">
<g fill="#bdbdbd">
<!-- header switch icons -->
<path d="M160.2,424.6 C160.2,419.6 167.8,419.6 167.8,424.6 Z M161,425.2 L163,425.2 L162,427 Z M165,425.2 L167,425.2 L166,427 Z"/>
<path d="M173,420 L176,423 L173,426 L170,423 Z" fill="none" stroke="#bdbdbd" stroke-width="0.9"/>
<line x1="179.5" y1="419.5" x2="185.5" y2="426.5" stroke="#bdbdbd" stroke-width="0.9"/>
<path d="M187.6,426.8 L189,420.4 L191.5,420.4 M188,423 L190.4,423 M190.2,423.5 L193,426.6 M193,423.5 L190.2,426.6" fill="none" stroke="#bdbdbd" stroke-width="0.8"/>
<rect x="195" y="420" width="8" height="6.6" fill="#cfcfcf"/><rect x="196" y="422" width="6" height="0.8" fill="#555"/><rect x="196" y="424" width="6" height="0.8" fill="#555"/>
<path d="M206,425 L209.5,420.6 M208.5,426.5 L212,422" fill="none" stroke="#bdbdbd" stroke-width="1.3"/>
<circle cx="217" cy="423.3" r="3.2"/><path d="M217,420.1 A3.2,3.2 0 0 0 217,426.5 Z" fill="#262626"/>
<path d="M226,419.6 L229.6,421.3 L229.6,425.3 L226,427 L222.4,425.3 L222.4,421.3 Z M222.4,421.3 L226,423 L229.6,421.3 M226,423 L226,427" fill="none" stroke="#bdbdbd" stroke-width="0.8"/>
<!-- row switches -->
<path d="M160.2,436 C160.2,431 167.8,431 167.8,436 Z M161,436.6 L163,436.6 L162,438.4 Z M165,436.6 L167,436.6 L166,438.4 Z"/>
<path d="M160.2,447 C160.2,442 167.8,442 167.8,447 Z M161,447.6 L163,447.6 L162,449.4 Z M165,447.6 L167,447.6 L166,449.4 Z"/>
</g>
<rect x="169.8" y="430.4" width="8" height="9.2" fill="#333"/><circle cx="173.8" cy="435" r="2.2" fill="#4a4a4a"/>
<rect x="169.8" y="441.6" width="8" height="8.6" fill="#1e1e1e"/>
<rect x="178.2" y="430.4" width="8" height="9.2" fill="#333"/><line x1="179" y1="438.8" x2="185.6" y2="431.6" stroke="#cfcfcf" stroke-width="0.9"/>
<rect x="178.2" y="441.6" width="8" height="8.6" fill="#1e1e1e"/><line x1="179" y1="449.4" x2="185.6" y2="442.4" stroke="#cfcfcf" stroke-width="0.9"/>
<g fill="#303030"><rect x="204.8" y="430.4" width="8" height="9.2"/><rect x="213.4" y="430.4" width="8" height="9.2"/><rect x="222" y="430.4" width="8" height="9.2"/></g>
<g fill="#1e1e1e"><rect x="204.8" y="441.6" width="8" height="8.6"/><rect x="213.4" y="441.6" width="8" height="8.6"/><rect x="222" y="441.6" width="8" height="8.6"/></g>
<!-- mode & parent -->
<rect x="241" y="429.6" width="40" height="10.4" fill="#1f1f1f"/>
<rect x="241" y="441.4" width="40" height="9.2" fill="#1f1f1f"/>
<rect x="283" y="429.6" width="68" height="10.4" fill="#474747"/>
<rect x="285" y="431.2" width="8" height="7.6" fill="#3a3a3a"/>
<rect x="285" y="442.2" width="8" height="7.6" fill="#1f1f1f"/>
<rect x="297" y="441.4" width="37" height="9.2" fill="#1f1f1f"/>
<rect x="339" y="441.4" width="12" height="9.2" fill="#333"/>
<rect x="352" y="429.6" width="52" height="10.4" fill="#1f1f1f"/>
<rect x="352" y="441.4" width="52" height="9.2" fill="#1f1f1f"/>
<g fill="none" stroke="#9a9a9a" stroke-width="0.9">
<path d="M276,434 L277.6,435.6 L279.2,434"/><path d="M276,445.4 L277.6,447 L279.2,445.4"/>
<path d="M329,445.4 L330.6,447 L332.2,445.4"/>
<path d="M397.6,434 L399.2,435.6 L400.8,434"/><path d="M397.6,445.4 L399.2,447 L400.8,445.4"/>
</g>
<g fill="none" stroke="#8a8a8a" stroke-width="0.8">
<circle cx="344.4" cy="435" r="3"/><path d="M345.6,435.4 C345.6,433.4 343,433.4 343,435.2 C343,436.6 345.4,437 347.4,435.4"/>
<circle cx="344.4" cy="446" r="3"/><path d="M345.6,446.4 C345.6,444.4 343,444.4 343,446.2 C343,447.6 345.4,448 347.4,446.4"/>
</g>
<!-- timeline toolbar icons -->
<g fill="none" stroke="#bdbdbd" stroke-width="0.9">
<path d="M307,403.8 L310.5,404.8 L313.5,404 M310.5,404.8 L310.5,407 L314.5,409.8" /><circle cx="306.8" cy="403.8" r="1.1" fill="#bdbdbd"/><circle cx="313.8" cy="404" r="1" fill="#bdbdbd"/><rect x="309.2" y="405.6" width="2.6" height="2.4" fill="#bdbdbd"/><circle cx="314.6" cy="410" r="1.1" fill="#bdbdbd"/>
<path d="M330,406.8 L333,405.3 L336,406.8 L336,410.2 L333,411.7 L330,410.2 Z M330,406.8 L333,408.3 L336,406.8 M333,408.3 L333,411.7"/>
<circle cx="328.6" cy="403.2" r="1.6" fill="#cfcfcf"/>
</g>
<g fill="#bdbdbd">
<path d="M346.4,409.6 L346.4,406.6 C346.4,403 355.6,403 355.6,406.6 L355.6,409.6 Z"/><rect x="346" y="409.8" width="10" height="1" fill="#8a8a8a"/>
<rect x="362" y="405" width="6" height="6.4"/><rect x="364" y="403" width="6.6" height="6.4" fill="#cfcfcf" stroke="#222" stroke-width="0.6"/>
<rect x="377.5" y="404.2" width="11" height="4.6" rx="2.3" transform="rotate(-45 383 406.5)" fill="none" stroke="#9a9a9a" stroke-width="1.1"/><circle cx="383" cy="406.5" r="1" fill="#9a9a9a"/>
</g>
<rect x="397.6" y="402" width="9.6" height="8.6" fill="none" stroke="#bdbdbd" stroke-width="0.9"/><path d="M399.5,404 C401.5,404 401.8,405.5 402.6,406.6 C403.4,407.8 404,408.6 405.5,408.6" fill="none" stroke="#bdbdbd" stroke-width="0.9"/>
</svg>
<div class="t" style="left:244.5px;top:431.6px;font-size:7px;color:#b0b0b0">正常</div>
<div class="t" style="left:244.5px;top:443.5px;font-size:7px;color:#b0b0b0">正常</div>
<div class="t" style="left:300px;top:443.5px;font-size:7px;color:#b0b0b0">无</div>
<div class="t" style="left:355px;top:431.6px;font-size:7px;color:#b0b0b0">无</div>
<div class="t" style="left:355px;top:443.5px;font-size:7px;color:#b0b0b0">无</div>
<!-- right timeline area -->
<div class="a" style="left:407.5px;top:429.2px;width:9px;height:11.2px;background:#303030"></div>
<div class="a" style="left:407.5px;top:440.6px;width:9px;height:10.4px;background:#2b2b2b"></div>
<div class="a" style="left:416px;top:396px;width:1.2px;height:62px;background:#1a1a1a"></div>
<div class="a" style="left:417.2px;top:399px;width:567.6px;height:7px;background:#222"></div><div class="a" style="left:421.5px;top:399.7px;width:563.3px;height:5.4px;background:#707070"></div>
<div class="a" style="left:417.2px;top:405.2px;width:567.6px;height:11.2px;background:#262626"></div>
<div class="a" style="left:417.2px;top:416.6px;width:567.6px;height:35px;background:#222"></div><div class="a" style="left:421.5px;top:417.4px;width:563.3px;height:8.6px;background:#6d6d6d"></div>
<div class="a" style="left:421.5px;top:425.6px;width:563.3px;height:4.2px;background:linear-gradient(#222 0,#2a5a2a 20%,#46b944 40%,#46b944 65%,#2a6a2a 85%,#3a3050 100%)"></div>
<div class="a" style="left:421.5px;top:430px;width:563.3px;height:10.2px;background:linear-gradient(#6b7ddd,#5869d3)"></div>
<div class="a" style="left:417.2px;top:440.2px;width:567.6px;height:1.2px;background:#1f1f1f"></div>
<div class="a" style="left:421.5px;top:441.4px;width:563.3px;height:10.2px;background:#787884"></div>
<div class="a" style="left:984.8px;top:379px;width:15.2px;height:79px;background:#242424"></div><div class="a" style="left:985px;top:427px;width:5px;height:31px;background:#2f2f2f"></div><div class="a" style="left:997.6px;top:379px;width:2.4px;height:79px;background:#1b1b1b"></div>
<svg style="left:0;top:0" width="1000" height="458">
<circle cx="420.4" cy="402.5" r="2.6" fill="#3d8ee6"/>
<path d="M984.2,399.9 L985.6,399.9 C988,399.9 988,405.2 985.6,405.2 L984.2,405.2 Z" fill="#3d8ee6"/>
<path d="M417.6,407.8 L425.4,407.8 L425.4,412.4 L421.5,416.9 L417.6,412.4 Z" fill="#3d8ee6"/>
<rect x="417.6" y="417.6" width="3" height="8.4" rx="1.2" fill="#3d8ee6"/>
<rect x="984.4" y="417.6" width="3" height="8.4" rx="1.2" fill="#3d8ee6"/>
<line x1="420.8" y1="416" x2="420.8" y2="458" stroke="#3d8ee6" stroke-width="0.9"/>
<path d="M990.6,419 L998,419 L998,424.4 L994.3,426.6 L990.6,424.4 Z" fill="#c8c8c8"/>
<path d="M990.5,432 L995,429.6 L998.5,432.6 L994,436.4 Z" fill="#bdbdbd"/><circle cx="992.6" cy="434.4" r="1.6" fill="#262626" stroke="#bdbdbd" stroke-width="0.7"/>
<g stroke="#9a9a9a" stroke-width="0.8"><line x1="534.4" y1="413.4" x2="534.4" y2="416.2"/><line x1="647" y1="413.4" x2="647" y2="416.2"/><line x1="759.6" y1="413.4" x2="759.6" y2="416.2"/><line x1="872.2" y1="413.4" x2="872.2" y2="416.2"/><line x1="984.8" y1="413.4" x2="984.8" y2="416.2"/></g>
</svg>
<div class="t" style="left:426px;top:407.6px;font-size:5.2px;color:#8a8a8a;font-family:'Liberation Serif',serif">s</div>
<div class="t" style="left:529.8px;top:406.4px;font-size:6.2px;color:#a0a0a0;font-family:'Liberation Serif',serif;letter-spacing:-0.2px">01s</div>
<div class="t" style="left:642.4px;top:406.4px;font-size:6.2px;color:#a0a0a0;font-family:'Liberation Serif',serif;letter-spacing:-0.2px">02s</div>
<div class="t" style="left:755.0px;top:406.4px;font-size:6.2px;color:#a0a0a0;font-family:'Liberation Serif',serif;letter-spacing:-0.2px">03s</div>
<div class="t" style="left:867.6px;top:406.4px;font-size:6.2px;color:#a0a0a0;font-family:'Liberation Serif',serif;letter-spacing:-0.2px">04s</div>
<div class="t" style="left:980.2px;top:406.4px;font-size:6.2px;color:#a0a0a0;font-family:'Liberation Serif',serif;letter-spacing:-0.2px">05s</div>

<svg style="left:256.4px;top:57.8px" width="571.7" height="304.8"><defs><pattern id="ck" patternUnits="userSpaceOnUse" x="0" y="0.94" width="9.524" height="9.524"><rect width="9.524" height="9.524" fill="#fefefe"/><rect x="4.762" width="4.762" height="4.762" fill="#cccccc"/><rect y="4.762" width="4.762" height="4.762" fill="#cccccc"/></pattern></defs><rect width="571.7" height="304.8" fill="url(#ck)"/></svg>
<svg style="left:0;top:0" width="1000" height="458">
<path d="M389.8,209.5 C441.8,129.5 521.3,129 540.3,129 C616.3,129 687.8,188.2 693.8,210.2 C691.8,218.2 625.3,289.3 540.3,289.3 C479.3,289.3 401.8,237.5 389.8,209.5 Z" fill="#000" stroke="#6c7fe0" stroke-width="0.9"/>
<g stroke="#6c7fe0" fill="#6c7fe0" stroke-width="0.9">
<line x1="540.3" y1="129" x2="634" y2="131.2"/><circle cx="634" cy="131.2" r="1.3"/>
<rect x="538.3" y="127" width="4" height="4" fill="none"/>
<line x1="540.3" y1="289.5" x2="610" y2="290.8"/><circle cx="610" cy="290.8" r="1.3"/>
<circle cx="540.3" cy="289.5" r="1.5" fill="none"/>
<line x1="696" y1="201" x2="690.3" y2="225.5"/><circle cx="696" cy="201" r="1.2"/><circle cx="690.3" cy="225.5" r="1.3"/>
<rect x="692" y="208.3" width="4" height="4"/>
<circle cx="389.8" cy="209.5" r="1.5" fill="none"/>
</g>
</svg>
<svg style="left:0;top:0" width="1000" height="458"><circle cx="848.2" cy="460.6" r="4.7" fill="#d6d6d6"/><circle cx="864.7" cy="461.5" r="4" fill="#9a9a9a"/></svg>
</body></html>
